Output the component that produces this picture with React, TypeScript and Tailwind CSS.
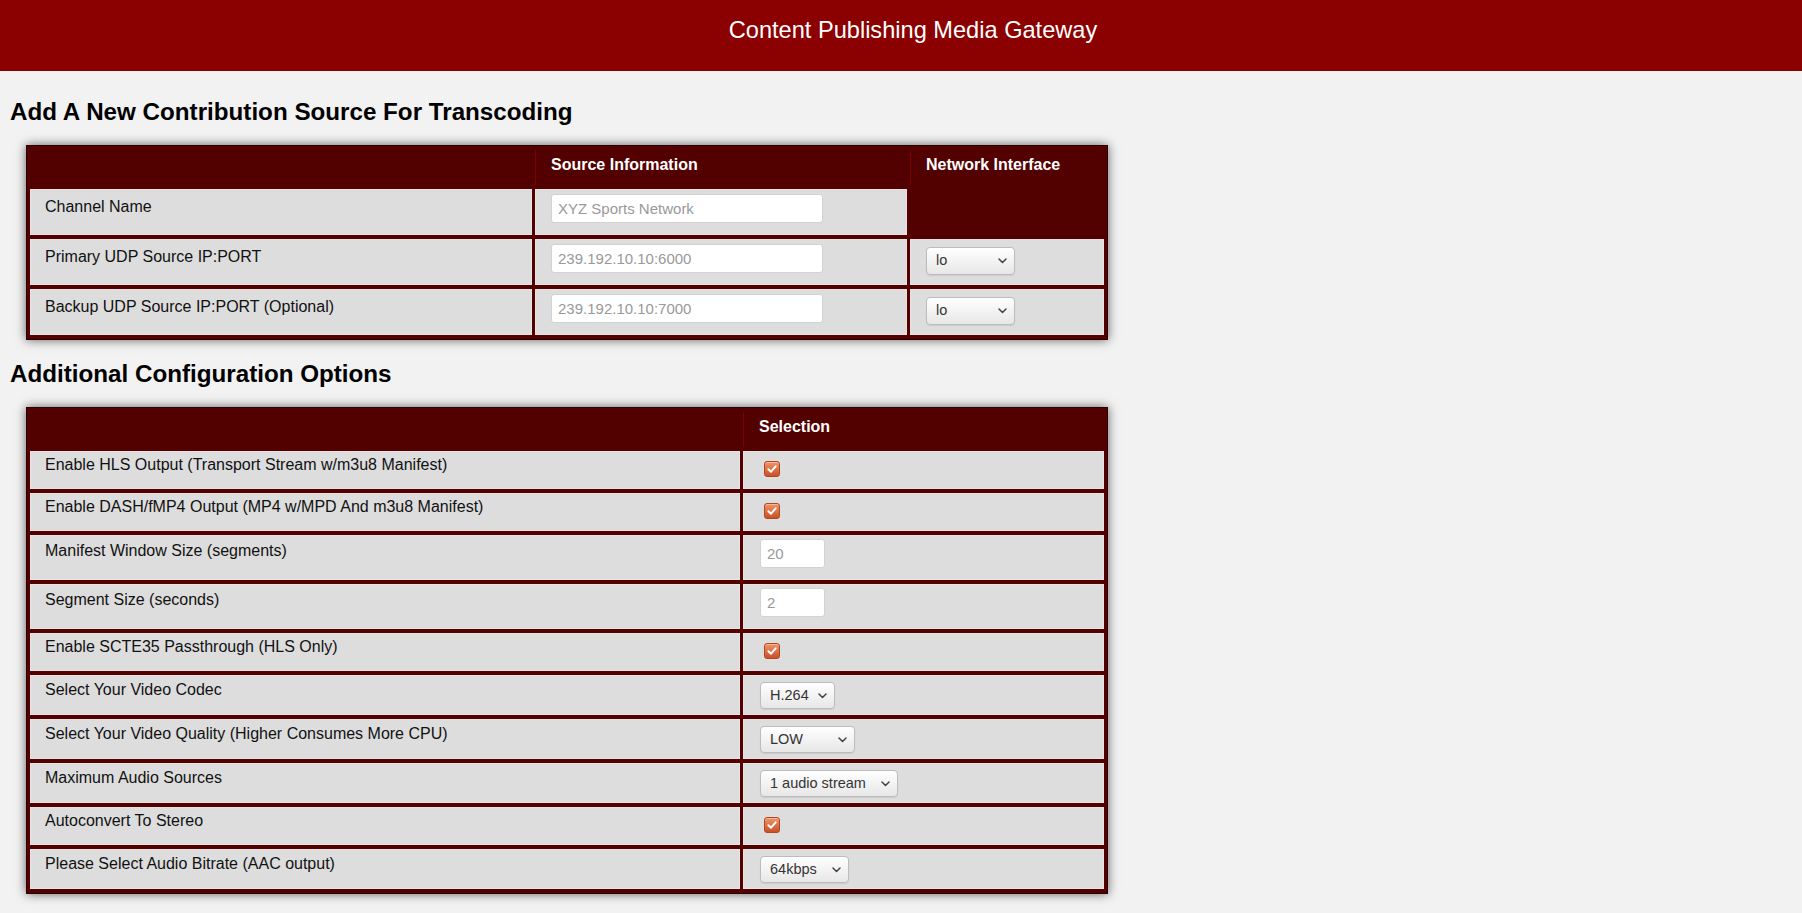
import React from "react";

type Kind = "check" | "input" | "select";

type Option = {
  label: string;
  kind: Kind;
  placeholder?: string;
  value?: string;
  width?: string;
};

const options: Option[] = [
  { label: "Enable HLS Output (Transport Stream w/m3u8 Manifest)", kind: "check" },
  { label: "Enable DASH/fMP4 Output (MP4 w/MPD And m3u8 Manifest)", kind: "check" },
  { label: "Manifest Window Size (segments)", kind: "input", placeholder: "20" },
  { label: "Segment Size (seconds)", kind: "input", placeholder: "2" },
  { label: "Enable SCTE35 Passthrough (HLS Only)", kind: "check" },
  { label: "Select Your Video Codec", kind: "select", value: "H.264", width: "w-[75px]" },
  { label: "Select Your Video Quality (Higher Consumes More CPU)", kind: "select", value: "LOW", width: "w-[95px]" },
  { label: "Maximum Audio Sources", kind: "select", value: "1 audio stream", width: "w-[138px]" },
  { label: "Autoconvert To Stereo", kind: "check" },
  { label: "Please Select Audio Bitrate (AAC output)", kind: "select", value: "64kbps", width: "w-[89px]" },
];

// per row type: cell height, label top padding, control top padding
const rowStyle: Record<Kind, { h: string; labelPt: string; ctrlPt: string }> = {
  check: { h: "h-[38px]", labelPt: "pt-[3.5px]", ctrlPt: "pt-[9px]" },
  input: { h: "h-[45px]", labelPt: "pt-[5.5px]", ctrlPt: "pt-[3px]" },
  select: { h: "h-[40px]", labelPt: "pt-[4.5px]", ctrlPt: "pt-[6px]" },
};

function Checkbox() {
  return (
    <span className="ml-[4px] flex h-[16px] w-[16px] items-center justify-center rounded-[3px] border border-[#b0471f] bg-linear-to-b from-[#ef9468] to-[#c94f27] shadow-[inset_0_1px_0_rgba(255,255,255,0.35)]">
      <svg width="12" height="12" viewBox="0 0 12 12">
        <path d="M2.4 6.3 L5 8.7 L9.7 3.3" fill="none" stroke="white" strokeWidth="2" strokeLinecap="round" strokeLinejoin="round" />
      </svg>
    </span>
  );
}

function Select({ value, width, height }: { value: string; width: string; height: string }) {
  return (
    <div className={`relative ${width} ${height}`}>
      <select className="h-full w-full appearance-none rounded-[4px] border border-[#bcbcbc] bg-linear-to-b from-white to-[#e7e7e7] pl-[9px] text-[14.5px] text-[#333] shadow-[0_1px_1px_rgba(0,0,0,0.08)] outline-none">
        <option>{value}</option>
      </select>
      <svg className="pointer-events-none absolute right-[8px] top-1/2 -translate-y-1/2" width="9" height="6" viewBox="0 0 9 6">
        <path d="M1 1 L4.5 4.5 L8 1" fill="none" stroke="#444" strokeWidth="1.5" strokeLinecap="round" strokeLinejoin="round" />
      </svg>
    </div>
  );
}

function TextInput({ placeholder, width }: { placeholder: string; width: string }) {
  return (
    <input
      placeholder={placeholder}
      className={`${width} h-[29px] rounded-[3px] border border-[#d2d2d2] bg-white px-[6px] text-[15px] text-[#333] outline-none placeholder:text-[#999]`}
    />
  );
}

const tableCls =
  "ml-[16px] w-[1082px] table-fixed border-separate border-spacing-x-[3px] border-spacing-y-[4px] border border-[#2a0000] bg-[#520000] shadow-[0_0_10px_rgba(0,0,0,0.6)]";

function Th({ children, first }: { children?: React.ReactNode; first?: boolean }) {
  return (
    <th className="p-0 text-left align-top">
      <div
        className={
          first
            ? "h-[35px]"
            : "h-[35px] border-l border-[#7e0000] pl-[15px] pt-[5.5px] text-[16px] font-bold leading-[18px] text-white"
        }
      >
        {children}
      </div>
    </th>
  );
}

const sources = [
  { label: "Channel Name", placeholder: "XYZ Sports Network", iface: false },
  { label: "Primary UDP Source IP:PORT", placeholder: "239.192.10.10:6000", iface: true },
  { label: "Backup UDP Source IP:PORT (Optional)", placeholder: "239.192.10.10:7000", iface: true },
];

export default function App() {
  return (
    <div className="min-h-screen bg-[#f2f2f2] pb-[10px] font-['Liberation_Sans',Arial,sans-serif] text-[16px] text-[#111]">
      <header className="h-[71px] bg-[#8b0000] pl-[24px] pt-[17px] text-center text-[23.6px] leading-[27.6px] text-white">
        Content Publishing Media Gateway
      </header>

      <main className="px-[10px]">
        <h2 className="mb-[19.5px] mt-[27px] text-[24.2px] font-bold leading-[27.6px] text-black">
          Add A New Contribution Source For Transcoding
        </h2>

        <table className={tableCls}>
          <colgroup>
            <col className="w-[502px]" />
            <col className="w-[372px]" />
            <col className="w-[194px]" />
          </colgroup>
          <thead>
            <tr>
              <Th first />
              <Th>Source Information</Th>
              <Th>Network Interface</Th>
            </tr>
          </thead>
          <tbody>
            {sources.map((s) => (
              <tr key={s.label}>
                <td className="p-0 align-top">
                  <div className="h-[46px] border border-[#e9e2e2] bg-[#dddddd] pl-[14px] pt-[7.5px] leading-[18px]">
                    {s.label}
                  </div>
                </td>
                <td className="p-0 align-top">
                  <div className="h-[46px] border border-[#e9e2e2] bg-[#dddddd] pl-[15px] pt-[4px]">
                    <TextInput placeholder={s.placeholder} width="w-[272px]" />
                  </div>
                </td>
                <td className="p-0 align-top">
                  {s.iface ? (
                    <div className="h-[46px] border border-[#e9e2e2] bg-[#dddddd] pl-[15px] pt-[7px]">
                      <Select value="lo" width="w-[89px]" height="h-[28px]" />
                    </div>
                  ) : (
                    <div className="h-[46px]" />
                  )}
                </td>
              </tr>
            ))}
          </tbody>
        </table>

        <h2 className="mb-[19.5px] mt-[20px] text-[24.2px] font-bold leading-[27.6px] text-black">
          Additional Configuration Options
        </h2>

        <table className={tableCls}>
          <colgroup>
            <col className="w-[710px]" />
            <col className="w-[361px]" />
          </colgroup>
          <thead>
            <tr>
              <Th first />
              <Th>Selection</Th>
            </tr>
          </thead>
          <tbody>
            {options.map((o) => {
              const st = rowStyle[o.kind];
              return (
                <tr key={o.label}>
                  <td className="p-0 align-top">
                    <div className={`${st.h} ${st.labelPt} border border-[#e9e2e2] bg-[#dddddd] pl-[14px] leading-[18px]`}>
                      {o.label}
                    </div>
                  </td>
                  <td className="p-0 align-top">
                    <div className={`${st.h} ${st.ctrlPt} flex items-start border border-[#e9e2e2] bg-[#dddddd] pl-[16px]`}>
                      {o.kind === "check" && <Checkbox />}
                      {o.kind === "input" && <TextInput placeholder={o.placeholder!} width="w-[65px]" />}
                      {o.kind === "select" && <Select value={o.value!} width={o.width!} height="h-[27px]" />}
                    </div>
                  </td>
                </tr>
              );
            })}
          </tbody>
        </table>
      </main>
    </div>
  );
}
